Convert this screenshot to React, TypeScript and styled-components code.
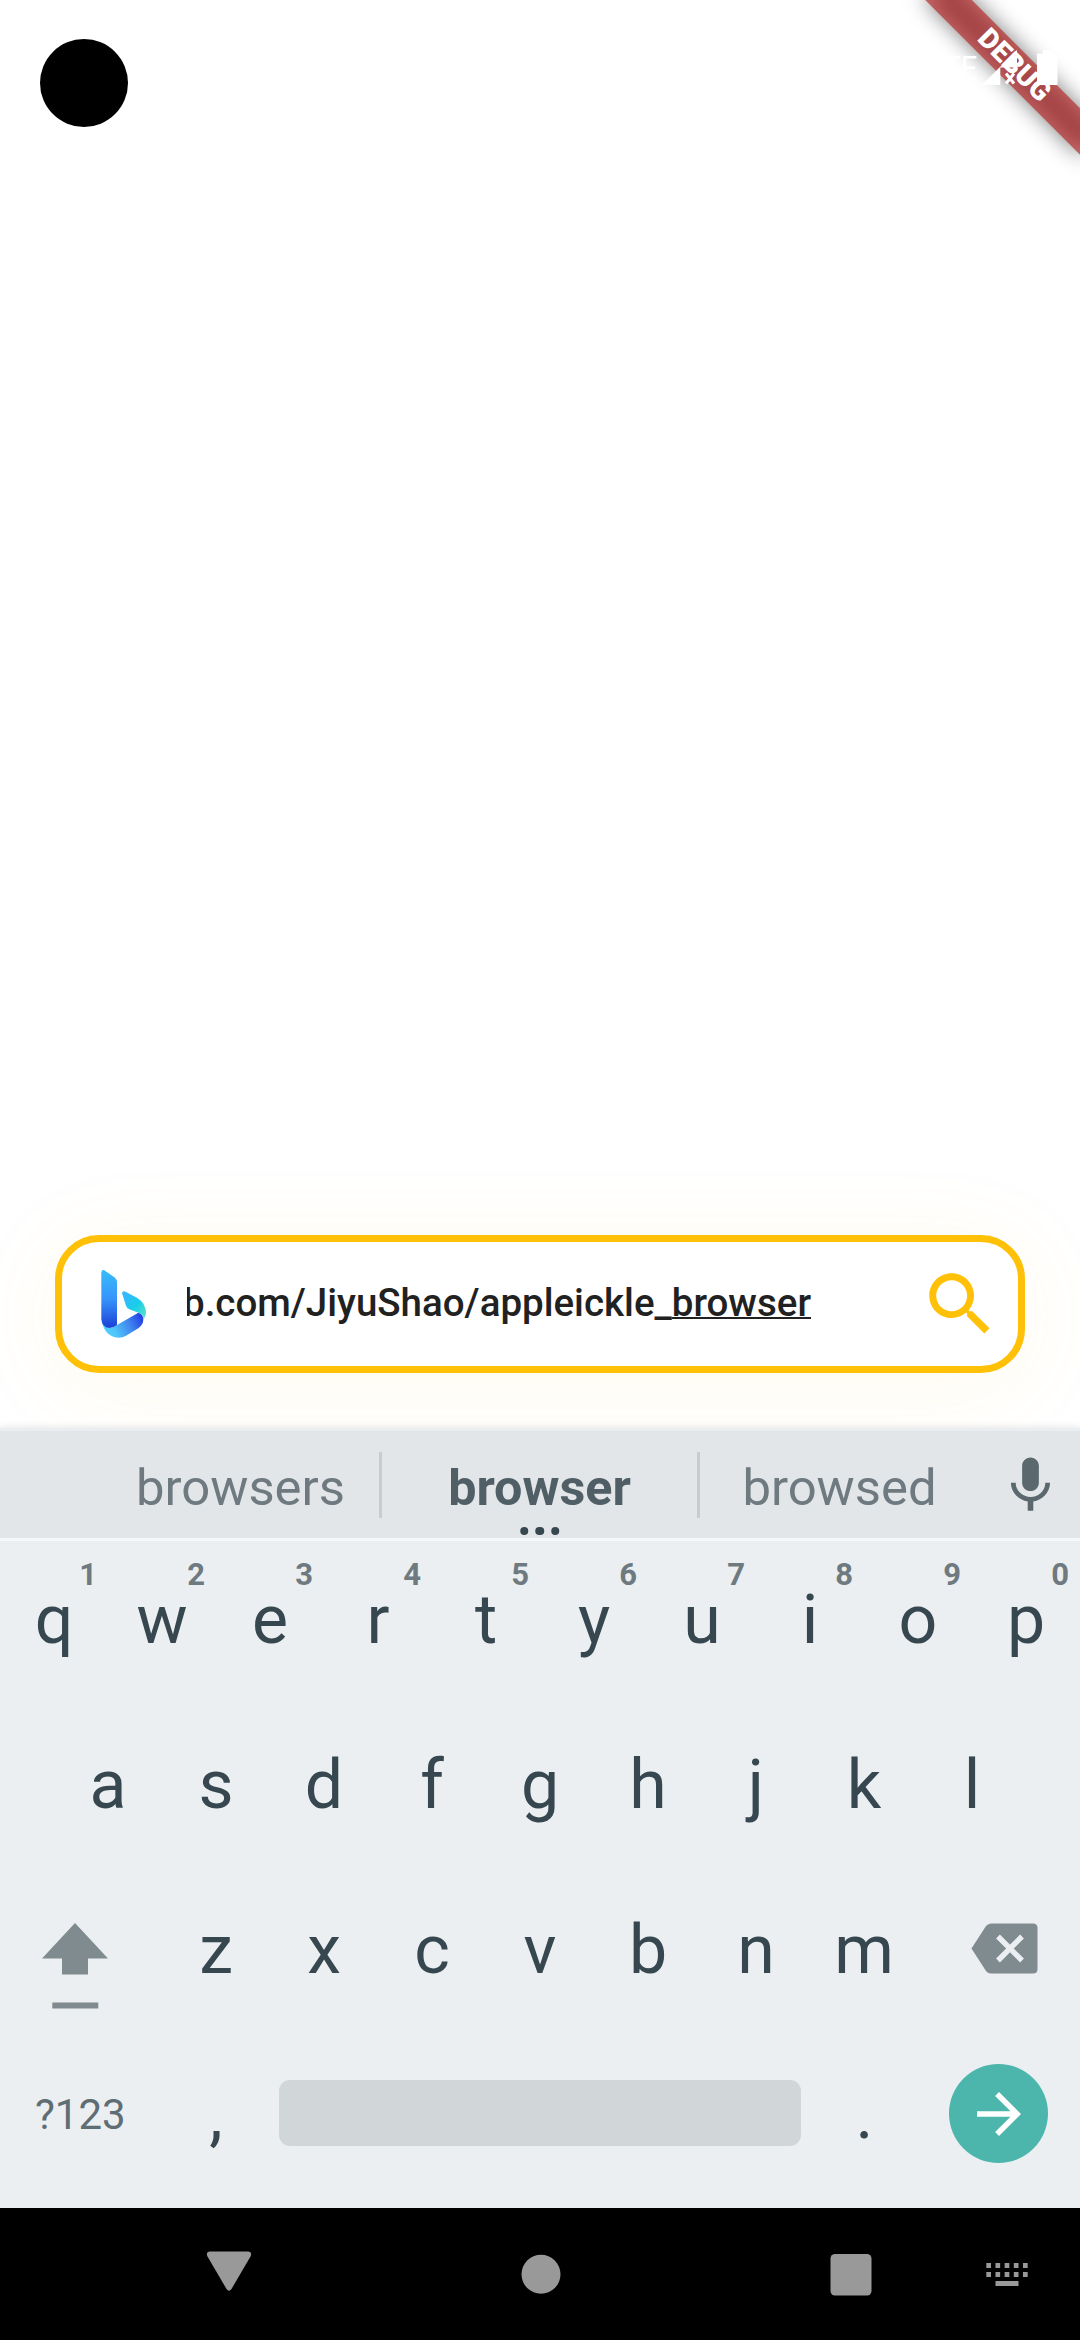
import React from 'react';
import styled, { createGlobalStyle } from 'styled-components';

const Global = createGlobalStyle`
  * { box-sizing: border-box; }
  body { margin: 0; background: #fff; }
`;

const Screen = styled.div`
  position: relative;
  width: 1080px;
  height: 2340px;
  overflow: hidden;
  display: flex;
  flex-direction: column;
  background: #fff;
  font-family: Roboto, 'Noto Sans', sans-serif;
`;

const Page = styled.main`
  height: 1428px;
  flex: none;
  display: flex;
  flex-direction: column;
  justify-content: space-between;
  padding: 39px 55px 55px;
`;

const CameraHole = styled.div`
  width: 88px;
  height: 88px;
  margin-left: -15px;
  border-radius: 50%;
  background: #000;
`;

const SearchBox = styled.div`
  height: 138px;
  display: flex;
  align-items: center;
  padding: 0 17px 0 38px;
  border: 7px solid #ffc107;
  border-radius: 44px;
  background: #fff;
  box-shadow: 0 12px 96px rgba(255, 193, 7, 0.08);
`;

const Query = styled.div`
  width: 624px;
  margin-left: 39px;
  padding-bottom: 2px;
  display: flex;
  justify-content: flex-end;
  overflow: hidden;
  white-space: nowrap;
  font-size: 38.5px;
  line-height: 56px;
  font-weight: 500;
  color: #212121;
`;

const Composing = styled.span`
  text-decoration: underline;
  text-decoration-thickness: 2px;
  text-underline-offset: 1px;
  text-decoration-skip-ink: none;
`;

const SearchIcon = styled.svg`
  width: 82.5px;
  height: 82.5px;
  margin-left: auto;
  fill: #ffc107;
`;

const Corner = styled.div`
  position: absolute;
  top: 0;
  right: 0;
  width: 260px;
  height: 260px;
  overflow: hidden;
`;

const RibbonShadow = styled.div`
  position: absolute;
  left: 84px;
  top: 49.3px;
  width: 220px;
  height: 33px;
  transform: rotate(45deg);
  background: rgba(0, 0, 0, 0.5);
  filter: blur(11px);
`;

const Ribbon = styled.div`
  position: absolute;
  left: 84px;
  top: 49.3px;
  width: 220px;
  height: 33px;
  transform: rotate(45deg);
  background: rgba(183, 28, 28, 0.627);
  color: #fff;
  font-size: 28px;
  line-height: 32px;
  font-weight: 900;
  text-align: center;
`;

const StatusBar = styled.div`
  position: absolute;
  top: 48px;
  right: 22px;
  display: flex;
  align-items: center;
  color: #fff;
  font-size: 34px;
  line-height: 40px;
`;

const Network = styled.span`
  transform: scaleX(0.85);
  transform-origin: right;
`;

const StatusIcons = styled.svg`
  width: 76px;
  height: 36px;
  margin-left: 5px;
  fill: #fff;
`;

const Keyboard = styled.section`
  height: 780px;
  flex: none;
  background: #ebeff2;
  box-shadow: 0 0 8px rgba(0, 0, 0, 0.12);
  position: relative;
`;

const Suggestions = styled.div`
  height: 113px;
  display: grid;
  grid-template-columns: 281px 317px 283px 97px;
  padding-left: 100px;
  border-top: 3px solid #ebeef0;
  border-bottom: 3px solid #f5f7f9;
  background: #e2e6e9;
`;

const Suggestion = styled.div<{ $main?: boolean }>`
  position: relative;
  display: flex;
  justify-content: center;
  align-items: center;
  padding-top: 7px;
  font-size: ${(p) => (p.$main ? 50.3 : 50.8)}px;
  line-height: 60px;
  color: ${(p) => (p.$main ? '#505e66' : '#6e7a80')};
  font-weight: ${(p) => (p.$main ? 700 : 400)};
  &:not(:nth-child(3))::after {
    content: '';
    position: absolute;
    right: ${(p) => (p.$main ? '-2px' : '-1px')};
    top: 21px;
    width: 3px;
    height: 66px;
    background: #c8cccf;
  }
`;

const MoreDots = styled.div`
  position: absolute;
  bottom: 3px;
  left: 50%;
  display: flex;
  gap: 7px;
  transform: translateX(-50%);
`;

const Dot = styled.i`
  width: 8.5px;
  height: 8.5px;
  border-radius: 50%;
  background: #37474f;
`;

const MicIcon = styled.svg`
  width: 67px;
  height: 67px;
  margin: 20.5px 0 0 16px;
  fill: #5b696f;
`;

const Rows = styled.div`
  margin-top: -3.5px;
`;

const Row = styled.div<{ $inset?: number }>`
  height: 165px;
  display: flex;
  padding: 0 ${(p) => p.$inset ?? 0}px;
`;

const Key = styled.div<{ $width?: number }>`
  position: relative;
  width: ${(p) => p.$width ?? 108}px;
  flex: none;
  display: flex;
  justify-content: center;
  align-items: center;
  font-size: 68px;
  line-height: 80px;
  color: #37474f;
`;

const Hint = styled.span`
  position: absolute;
  top: 17px;
  right: 11px;
  font-size: 31px;
  line-height: 40px;
  font-weight: 700;
  color: #6e7a80;
`;

const ShiftKey = styled(Key)`
  justify-content: flex-start;
  align-items: flex-start;
  padding: 55px 0 0 42px;
`;

const DeleteKey = styled(Key)`
  justify-content: flex-start;
  padding: 0 0 4px 52.5px;
`;

const SymbolKey = styled(Key)`
  justify-content: flex-start;
  padding: 0 0 0 35px;
  font-size: 42px;
  color: #5f6d74;
`;

const SpaceKey = styled.div`
  width: 522px;
  height: 66px;
  margin: 47.5px 9.5px 0 9px;
  border-radius: 11px;
  background: #d1d6d9;
`;

const EnterKey = styled.div`
  width: 99px;
  height: 99px;
  margin: 31.5px 0 0 30.5px;
  display: flex;
  align-items: center;
  justify-content: center;
  border-radius: 50%;
  background: #4db6ac;
`;

const NavBar = styled.nav`
  height: 132px;
  flex: none;
  display: grid;
  grid-template-columns: 150.5px 156px 156px 156px 154px 156px 156px;
  align-items: center;
  justify-items: center;
  background: #000;
  overflow: hidden;
`;

const NavIcon = styled.svg<{ $col: number }>`
  grid-column: ${(p) => p.$col};
  grid-row: 1;
  width: 48px;
  height: 48px;
  fill: #999;
`;

const BingLogo = () => (
  <svg width="48" height="70" viewBox="60 57 144 210">
    <defs>
      <linearGradient id="stem" x1="0" y1="0" x2="0" y2="1">
        <stop offset="0" stopColor="#37bdf8" />
        <stop offset="0.5" stopColor="#3794fb" />
        <stop offset="1" stopColor="#1c3fd6" />
      </linearGradient>
      <linearGradient id="bowl" x1="0" y1="0.6" x2="1" y2="0.3">
        <stop offset="0" stopColor="#50d2ff" />
        <stop offset="0.25" stopColor="#4fc4fa" />
        <stop offset="0.65" stopColor="#3f86ee" />
        <stop offset="1" stopColor="#2440e6" />
      </linearGradient>
      <linearGradient id="leaf" x1="0" y1="0" x2="1" y2="1">
        <stop offset="0.15" stopColor="#35b8ff" />
        <stop offset="0.55" stopColor="#18cfe8" />
        <stop offset="1" stopColor="#68e2c8" />
      </linearGradient>
    </defs>
    <path fill="url(#bowl)" d="M66 212C70 248 95 263 117 263Q128 263 138 257L175 235Q190 225 190 207Q188 190 175 188L111 225Q100 234 86 234Z" />
    <path fill="url(#stem)" d="M64 67Q65 58 73 61L103 82Q111 88 111 98V225Q100 234 88 234Q66 232 64 208Z" />
    <path fill="url(#leaf)" d="M126 129Q128 121 138 126L172 144Q198 160 198 190Q197 200 191 208Q190 192 175 188L148 178Q141 175 138 167Z" />
  </svg>
);

const TOP_ROW = 'qwertyuiop'.split('');
const HINTS = '1234567890'.split('');
const HOME_ROW = 'asdfghjkl'.split('');
const BOTTOM_ROW = 'zxcvbnm'.split('');
const DOT_COLUMNS = [0, 1, 2, 3, 4];

export default function App() {
  return (
    <Screen>
      <Global />
      <Page>
        <CameraHole />
        <SearchBox>
          <BingLogo />
          <Query>
            <span>b.com/JiyuShao/appleickle_<Composing>browser</Composing></span>
          </Query>
          <SearchIcon viewBox="0 0 24 24">
            <path d="M15.5 14h-.79l-.28-.27C15.41 12.59 16 11.11 16 9.5 16 5.91 13.09 3 9.5 3S3 5.91 3 9.5 5.91 16 9.5 16c1.61 0 3.09-.59 4.23-1.57l.27.28v.79l5 4.99L20.49 19l-4.99-5zm-6 0C7.01 14 5 11.99 5 9.5S7.01 5 9.5 5 14 7.01 14 9.5 11.99 14 9.5 14z" />
          </SearchIcon>
        </SearchBox>
      </Page>

      <Keyboard>
        <Suggestions>
          <Suggestion>browsers</Suggestion>
          <Suggestion $main>
            browser
            <MoreDots><Dot /><Dot /><Dot /></MoreDots>
          </Suggestion>
          <Suggestion>browsed</Suggestion>
          <MicIcon viewBox="0 0 24 24">
            <path d="M12 14c1.66 0 2.99-1.34 2.99-3L15 5c0-1.66-1.34-3-3-3S9 3.34 9 5v6c0 1.66 1.34 3 3 3zm5.3-3c0 3-2.54 5.1-5.3 5.1S6.7 14 6.7 11H5c0 3.41 2.72 6.23 6 6.72V21h2v-3.28c3.28-.48 6-3.3 6-6.72h-1.7z" />
          </MicIcon>
        </Suggestions>
        <Rows>
          <Row>
            {TOP_ROW.map((k, i) => (
              <Key key={k}>{k}<Hint>{HINTS[i]}</Hint></Key>
            ))}
          </Row>
          <Row $inset={54}>
            {HOME_ROW.map((k) => <Key key={k}>{k}</Key>)}
          </Row>
          <Row>
            <ShiftKey $width={162}>
              <svg width="66" height="86" viewBox="0 0 66 86" fill="#808b90">
                <path d="M33 0L66 35.5H46V51.5H20V35.5H0Z" />
                <rect x="10.3" y="79.5" width="46" height="6" />
              </svg>
            </ShiftKey>
            {BOTTOM_ROW.map((k) => <Key key={k}>{k}</Key>)}
            <DeleteKey $width={162}>
              <svg width="67" height="51" viewBox="0 0 67 51">
                <path fill="#808b90" d="M0.5 25.5L15 3Q17 0.5 20 0.5H62Q66.5 0.5 66.5 5V46Q66.5 50.5 62 50.5H20Q17 50.5 15 48Z" />
                <path stroke="#ebeff2" strokeWidth="5.4" d="M27 13.5L51 37.5M51 13.5L27 37.5" />
              </svg>
            </DeleteKey>
          </Row>
          <Row>
            <SymbolKey $width={162}>?123</SymbolKey>
            <Key>,</Key>
            <SpaceKey />
            <Key>.</Key>
            <EnterKey>
              <svg width="66" height="66" viewBox="0 0 24 24" fill="#fff">
                <path d="M12 4l-1.41 1.41L16.17 11H4v2h12.17l-5.58 5.59L12 20l8-8z" />
              </svg>
            </EnterKey>
          </Row>
        </Rows>
      </Keyboard>

      <NavBar>
        <NavIcon $col={2} viewBox="0 0 48 48">
          <path d="M4.5 1.5H43.5Q47.5 2 45.5 6.5L26.5 39Q24 42.5 21.5 39L2.5 6.5Q0.5 2 4.5 1.5Z" />
        </NavIcon>
        <NavIcon $col={4} viewBox="0 0 48 48">
          <circle cx="24" cy="24.3" r="19.5" />
        </NavIcon>
        <NavIcon $col={6} viewBox="0 0 48 48">
          <rect x="3.5" y="4" width="41" height="41.5" rx="4.5" />
        </NavIcon>
        <NavIcon $col={7} viewBox="0 0 48 48">
          {DOT_COLUMNS.map((c) => (
            <React.Fragment key={c}>
              <rect x={3.3 + c * 9.17} y="13" width="4.7" height="5" />
              <rect x={3.3 + c * 9.17} y="22" width="4.7" height="5" />
            </React.Fragment>
          ))}
          <rect x="12.5" y="31" width="23" height="5" />
        </NavIcon>
      </NavBar>

      <Corner>
        <RibbonShadow />
        <Ribbon>DEBUG</Ribbon>
      </Corner>
      <StatusBar>
        <Network>LTE</Network>
        <StatusIcons viewBox="0 0 76 36">
          <path d="M0 35L35 0V17.5H18.3V35Z" />
          <path d="M24 23.5L32 33.5M32 23.5L24 33.5" stroke="#fff" strokeWidth="3" />
          <path d="M61 0H70V3.5H75.5V35H55V3.5H61Z" />
        </StatusIcons>
      </StatusBar>
    </Screen>
  );
}
